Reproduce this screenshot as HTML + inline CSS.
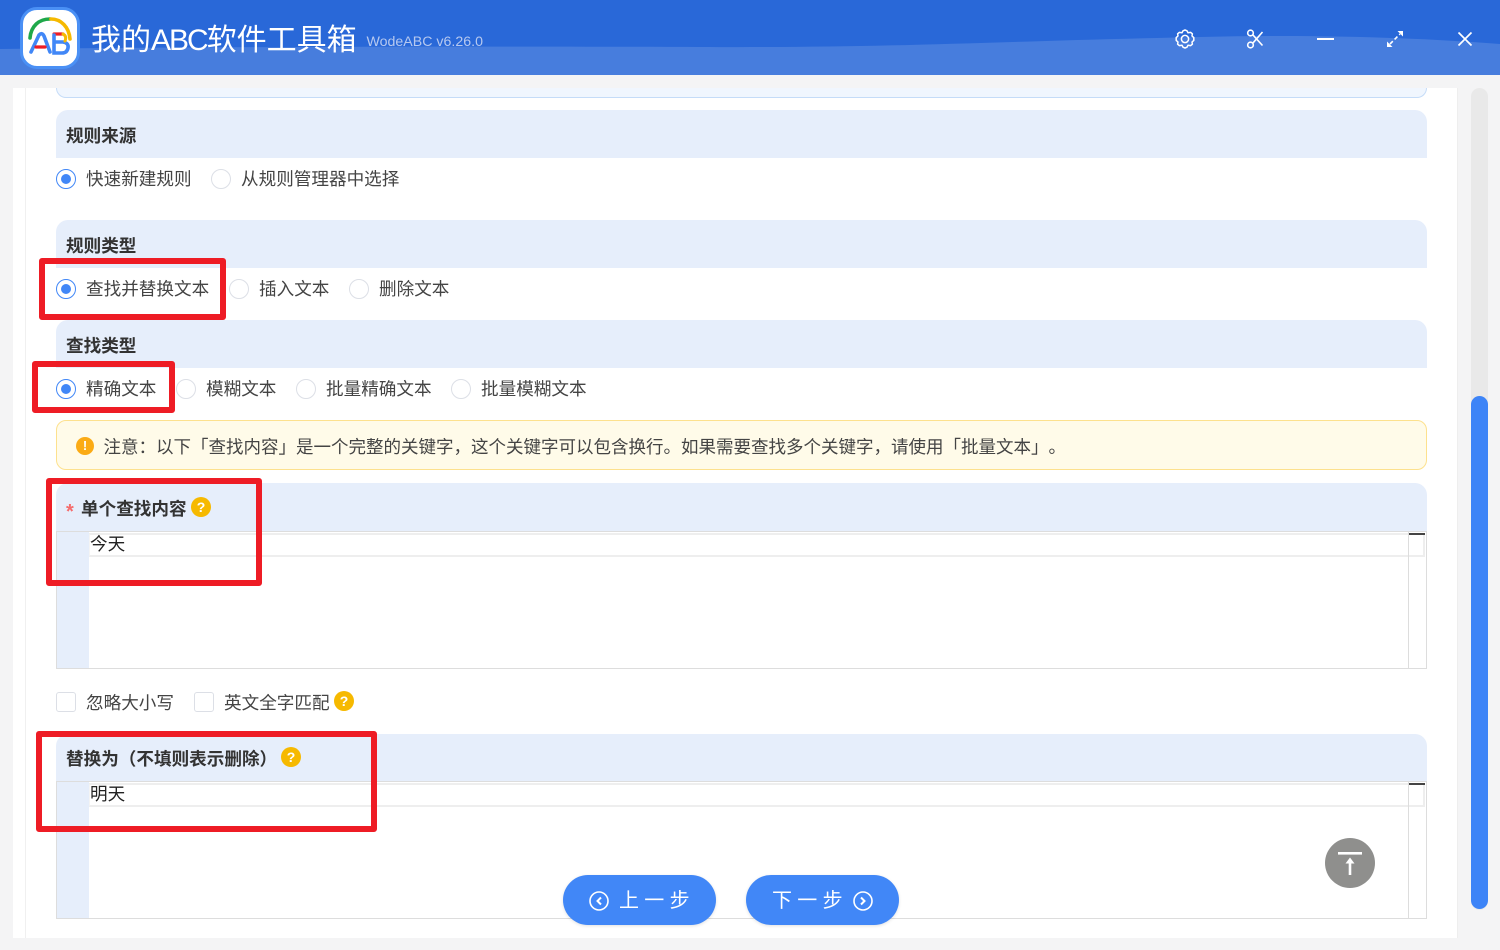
<!DOCTYPE html>
<html lang="zh"><head><meta charset="utf-8"><title>我的ABC软件工具箱</title>
<style>
*{box-sizing:border-box}
html,body{margin:0;padding:0}
body{width:1500px;height:950px;overflow:hidden;position:relative;background:#f4f4f5;font-family:"Liberation Sans","Noto Sans CJK SC",sans-serif;color:#333;text-spacing-trim:space-all}
.a{position:absolute}
.t{position:absolute;white-space:nowrap;font-size:17.6px;line-height:24px;color:#444}
.h{position:absolute;left:56px;width:1371px;height:48px;background:#e6eefb;border-radius:12px 12px 0 0}
.b{position:absolute;white-space:nowrap;font-size:17.6px;line-height:24px;font-weight:700;color:#333;left:66px;margin-top:1px}
.r{position:absolute;width:20px;height:20px;border-radius:50%;border:1px solid #dcdfe6;background:#fff}
.r.on{border-color:#4187f7}
.r.on:after{content:"";position:absolute;left:4px;top:4px;width:10px;height:10px;border-radius:50%;background:#4187f7}
.red{position:absolute;border:6px solid #ee1c25;border-radius:3px}
.q{position:absolute;width:20px;height:20px;border-radius:50%;background:#f6b900;color:#fff;font-size:14px;line-height:20px;text-align:center;font-weight:700}
.c{position:absolute;width:20px;height:20px;border:1px solid #dcdfe6;border-radius:3px;background:#fff}
.ed{position:absolute;left:56px;width:1371px;border:1px solid #ddd;background:#fff}
.gut{position:absolute;left:0;top:0;bottom:0;width:32px;background:#e6eefb}
.line{position:absolute;left:32px;right:1px;top:1px;height:24px;border:2px solid #eee;border-left:1px solid #f4f4f4;background:#fff}
.sb{position:absolute;right:17px;top:0;bottom:0;width:1px;background:#ddd}
.sbt{position:absolute;right:1px;top:1px;width:16px;height:2px;background:#444}
.btn{position:absolute;top:875px;width:153px;height:50px;border-radius:25px;background:#4187f7;color:#fff;font-size:20px;line-height:50px;box-shadow:0 1px 3px rgba(0,0,0,.12)}
.btn span{position:absolute;top:1px;white-space:nowrap}
.btn svg{position:absolute;top:15px}
</style></head><body>

<div class="a" style="left:0;top:0;width:1500px;height:75px;background:#2968d8;overflow:hidden">
<svg class="a" style="left:0;top:0" width="1500" height="75"><path d="M0 49 C200 47 420 46 700 47 C900 48 1000 41 1200 37 C1320 34 1420 38 1500 44 L1500 75 L0 75Z" fill="#477ddd"/></svg>
</div>
<div class="a" style="left:20px;top:7px;width:60px;height:62px;border-radius:17px;background:#fff;border:3px solid #4a90f5"></div>
<svg class="a" style="left:20px;top:7px" width="60" height="62" fill="none" stroke-linecap="round">
<path d="M10 31 C11 19 19 12 30 12" stroke="#1fa84a" stroke-width="3.6"/>
<path d="M31 12 C41 12 49 20 50 32" stroke="#f6b900" stroke-width="3.6"/>
<path d="M11 45 L19 28 Q22 25 24 29 L30 45" stroke="#4187f7" stroke-width="3.6"/>
<path d="M16 40 H25" stroke="#ee1c25" stroke-width="3.2"/>
<path d="M34 27 H43" stroke="#ee1c25" stroke-width="3.2"/>
<path d="M34 35 H43 Q49 36 48 41 Q47 46 42 46 H34 V28" stroke="#4187f7" stroke-width="3.6"/>
<path d="M43 27 Q47 29 45 34" stroke="#f6b900" stroke-width="3"/>
</svg>
<div class="t" style="left:91px;top:20px;font-size:30px;line-height:42px;color:#fff">我的<span style="letter-spacing:-2px">ABC</span>软件工具箱</div>
<div class="t" style="left:366.5px;top:32px;font-size:14.2px;line-height:20px;color:#b7c9ef">WodeABC v6.26.0</div>

<svg class="a" style="left:1170px;top:24px" width="30" height="30" fill="none" stroke="#fff" stroke-width="1.5" stroke-linejoin="round"><path d="M15 6 L17 6.8 L18 8.8 L20.6 8.4 L22.4 9.8 L22 12 L23.8 13.6 V16.4 L22 18 L22.4 20.2 L20.6 21.6 L18 21.2 L17 23.2 L15 24 L13 23.2 L12 21.2 L9.4 21.6 L7.6 20.2 L8 18 L6.2 16.4 V13.6 L8 12 L7.6 9.8 L9.4 8.4 L12 8.8 L13 6.8Z"/><circle cx="15" cy="15" r="3.6"/></svg>
<svg class="a" style="left:1240px;top:24px" width="30" height="30" fill="none" stroke="#fff" stroke-width="1.6"><circle cx="10.5" cy="9" r="2.8"/><circle cx="10.5" cy="21" r="2.8"/><path d="M12.8 10.8 L22.5 21.5 M12.8 19.2 L22.5 8"/></svg>
<div class="a" style="left:1317px;top:38px;width:17px;height:2px;background:#fff"></div>
<svg class="a" style="left:1380px;top:24px" width="30" height="30" fill="#fff" stroke="none"><path d="M7 23 V17.5 L12.5 23Z M23 7 V12.5 L17.5 7Z"/><path d="M10 20 L20 10" stroke="#fff" stroke-width="1.6" stroke-dasharray="4 2.5"/></svg>
<svg class="a" style="left:1450px;top:24px" width="30" height="30" fill="none" stroke="#fff" stroke-width="1.7"><path d="M8.5 8.5 L21.5 21.5 M21.5 8.5 L8.5 21.5"/></svg>

<div class="a" style="left:13px;top:88px;width:1445px;height:850px;background:#fff"></div>
<div class="a" style="left:25px;top:88px;width:1px;height:850px;background:#f0f0f0"></div>
<div class="a" style="left:1457px;top:88px;width:1px;height:850px;background:#eee"></div>
<div class="a" style="left:1471px;top:88px;width:17px;height:822px;border-radius:9px;background:#e9e9e9"></div>
<div class="a" style="left:1471px;top:396px;width:17px;height:513px;border-radius:9px;background:#3d84f7"></div>

<div class="a" style="left:56px;top:88px;width:1371px;height:10px;background:#f0f6fe;border:1px solid #c5dcf8;border-top:0;border-radius:0 0 12px 12px"></div>

<div class="h" style="top:110px"></div><div class="b" style="top:123px">规则来源</div>
<div class="r on" style="left:56px;top:169px"></div><div class="t" style="left:86px;top:167px">快速新建规则</div>
<div class="r" style="left:211px;top:169px"></div><div class="t" style="left:241px;top:167px">从规则管理器中选择</div>

<div class="h" style="top:220px"></div><div class="b" style="top:233px">规则类型</div>
<div class="r on" style="left:56px;top:279px"></div><div class="t" style="left:86px;top:277px">查找并替换文本</div>
<div class="r" style="left:229px;top:279px"></div><div class="t" style="left:259px;top:277px">插入文本</div>
<div class="r" style="left:349px;top:279px"></div><div class="t" style="left:379px;top:277px">删除文本</div>

<div class="h" style="top:320px"></div><div class="b" style="top:333px">查找类型</div>
<div class="r on" style="left:56px;top:379px"></div><div class="t" style="left:86px;top:377px">精确文本</div>
<div class="r" style="left:176px;top:379px"></div><div class="t" style="left:206px;top:377px">模糊文本</div>
<div class="r" style="left:296px;top:379px"></div><div class="t" style="left:326px;top:377px">批量精确文本</div>
<div class="r" style="left:451px;top:379px"></div><div class="t" style="left:481px;top:377px">批量模糊文本</div>

<div class="a" style="left:56px;top:420px;width:1371px;height:50px;background:#fffbe9;border:1px solid #fde18e;border-radius:10px"></div>
<div class="a" style="left:76px;top:437px;width:18px;height:18px;border-radius:50%;background:#fbab15;color:#fff;font-size:13px;line-height:18px;text-align:center;font-weight:700">!</div>
<div class="t" style="left:103.5px;top:435px;font-size:17.5px">注意：以下「查找内容」是一个完整的关键字，这个关键字可以包含换行。如果需要查找多个关键字，请使用「批量文本」。</div>

<div class="h" style="top:483px"></div>
<div class="t" style="left:66px;top:500px;color:#f56c6c;font-size:20px;font-weight:700">*</div>
<div class="b" style="left:81px;top:496px">单个查找内容</div>
<div class="q" style="left:191px;top:497px">?</div>
<div class="ed" style="top:531px;height:138px"><div class="gut"></div><div class="line"></div><div class="sb"></div><div class="sbt"></div>
<div class="t" style="left:33px;top:0;color:#222">今天</div></div>

<div class="c" style="left:56px;top:692px"></div><div class="t" style="left:86px;top:691px">忽略大小写</div>
<div class="c" style="left:194px;top:692px"></div><div class="t" style="left:224px;top:691px">英文全字匹配</div>
<div class="q" style="left:334px;top:691px">?</div>

<div class="h" style="top:734px"></div>
<div class="b" style="top:746px">替换为（不填则表示删除）</div>
<div class="q" style="left:281px;top:747px">?</div>
<div class="ed" style="top:781px;height:138px"><div class="gut"></div><div class="line"></div><div class="sb"></div><div class="sbt"></div>
<div class="t" style="left:33px;top:0;color:#222">明天</div></div>

<div class="red" style="left:39px;top:258px;width:187px;height:62px"></div>
<div class="red" style="left:32px;top:361px;width:143px;height:52px"></div>
<div class="red" style="left:46px;top:478px;width:216px;height:108px"></div>
<div class="red" style="left:36px;top:731px;width:341px;height:101px"></div>

<div class="a" style="left:1325px;top:838px;width:50px;height:50px;border-radius:50%;background:#8f8f8d"></div>
<svg class="a" style="left:1325px;top:838px" width="50" height="50" fill="#fff"><rect x="13" y="14" width="24" height="2.6"/><rect x="23.7" y="24" width="2.6" height="13"/><path d="M25 19.5 L29.5 25.5 H20.5Z"/></svg>

<div class="btn" style="left:563px"><svg style="left:25px" width="22" height="22" fill="none" stroke="#fff" stroke-width="1.6"><circle cx="11" cy="11" r="9"/><path d="M13 7.5 L9.5 11 L13 14.5" stroke-width="2"/></svg><span style="left:56px;letter-spacing:5.3px">上一步</span></div>
<div class="btn" style="left:746px"><span style="left:26px;letter-spacing:5.3px">下一步</span><svg style="left:106px" width="22" height="22" fill="none" stroke="#fff" stroke-width="1.6"><circle cx="11" cy="11" r="9"/><path d="M9 7.5 L12.5 11 L9 14.5" stroke-width="2"/></svg></div>

</body></html>
